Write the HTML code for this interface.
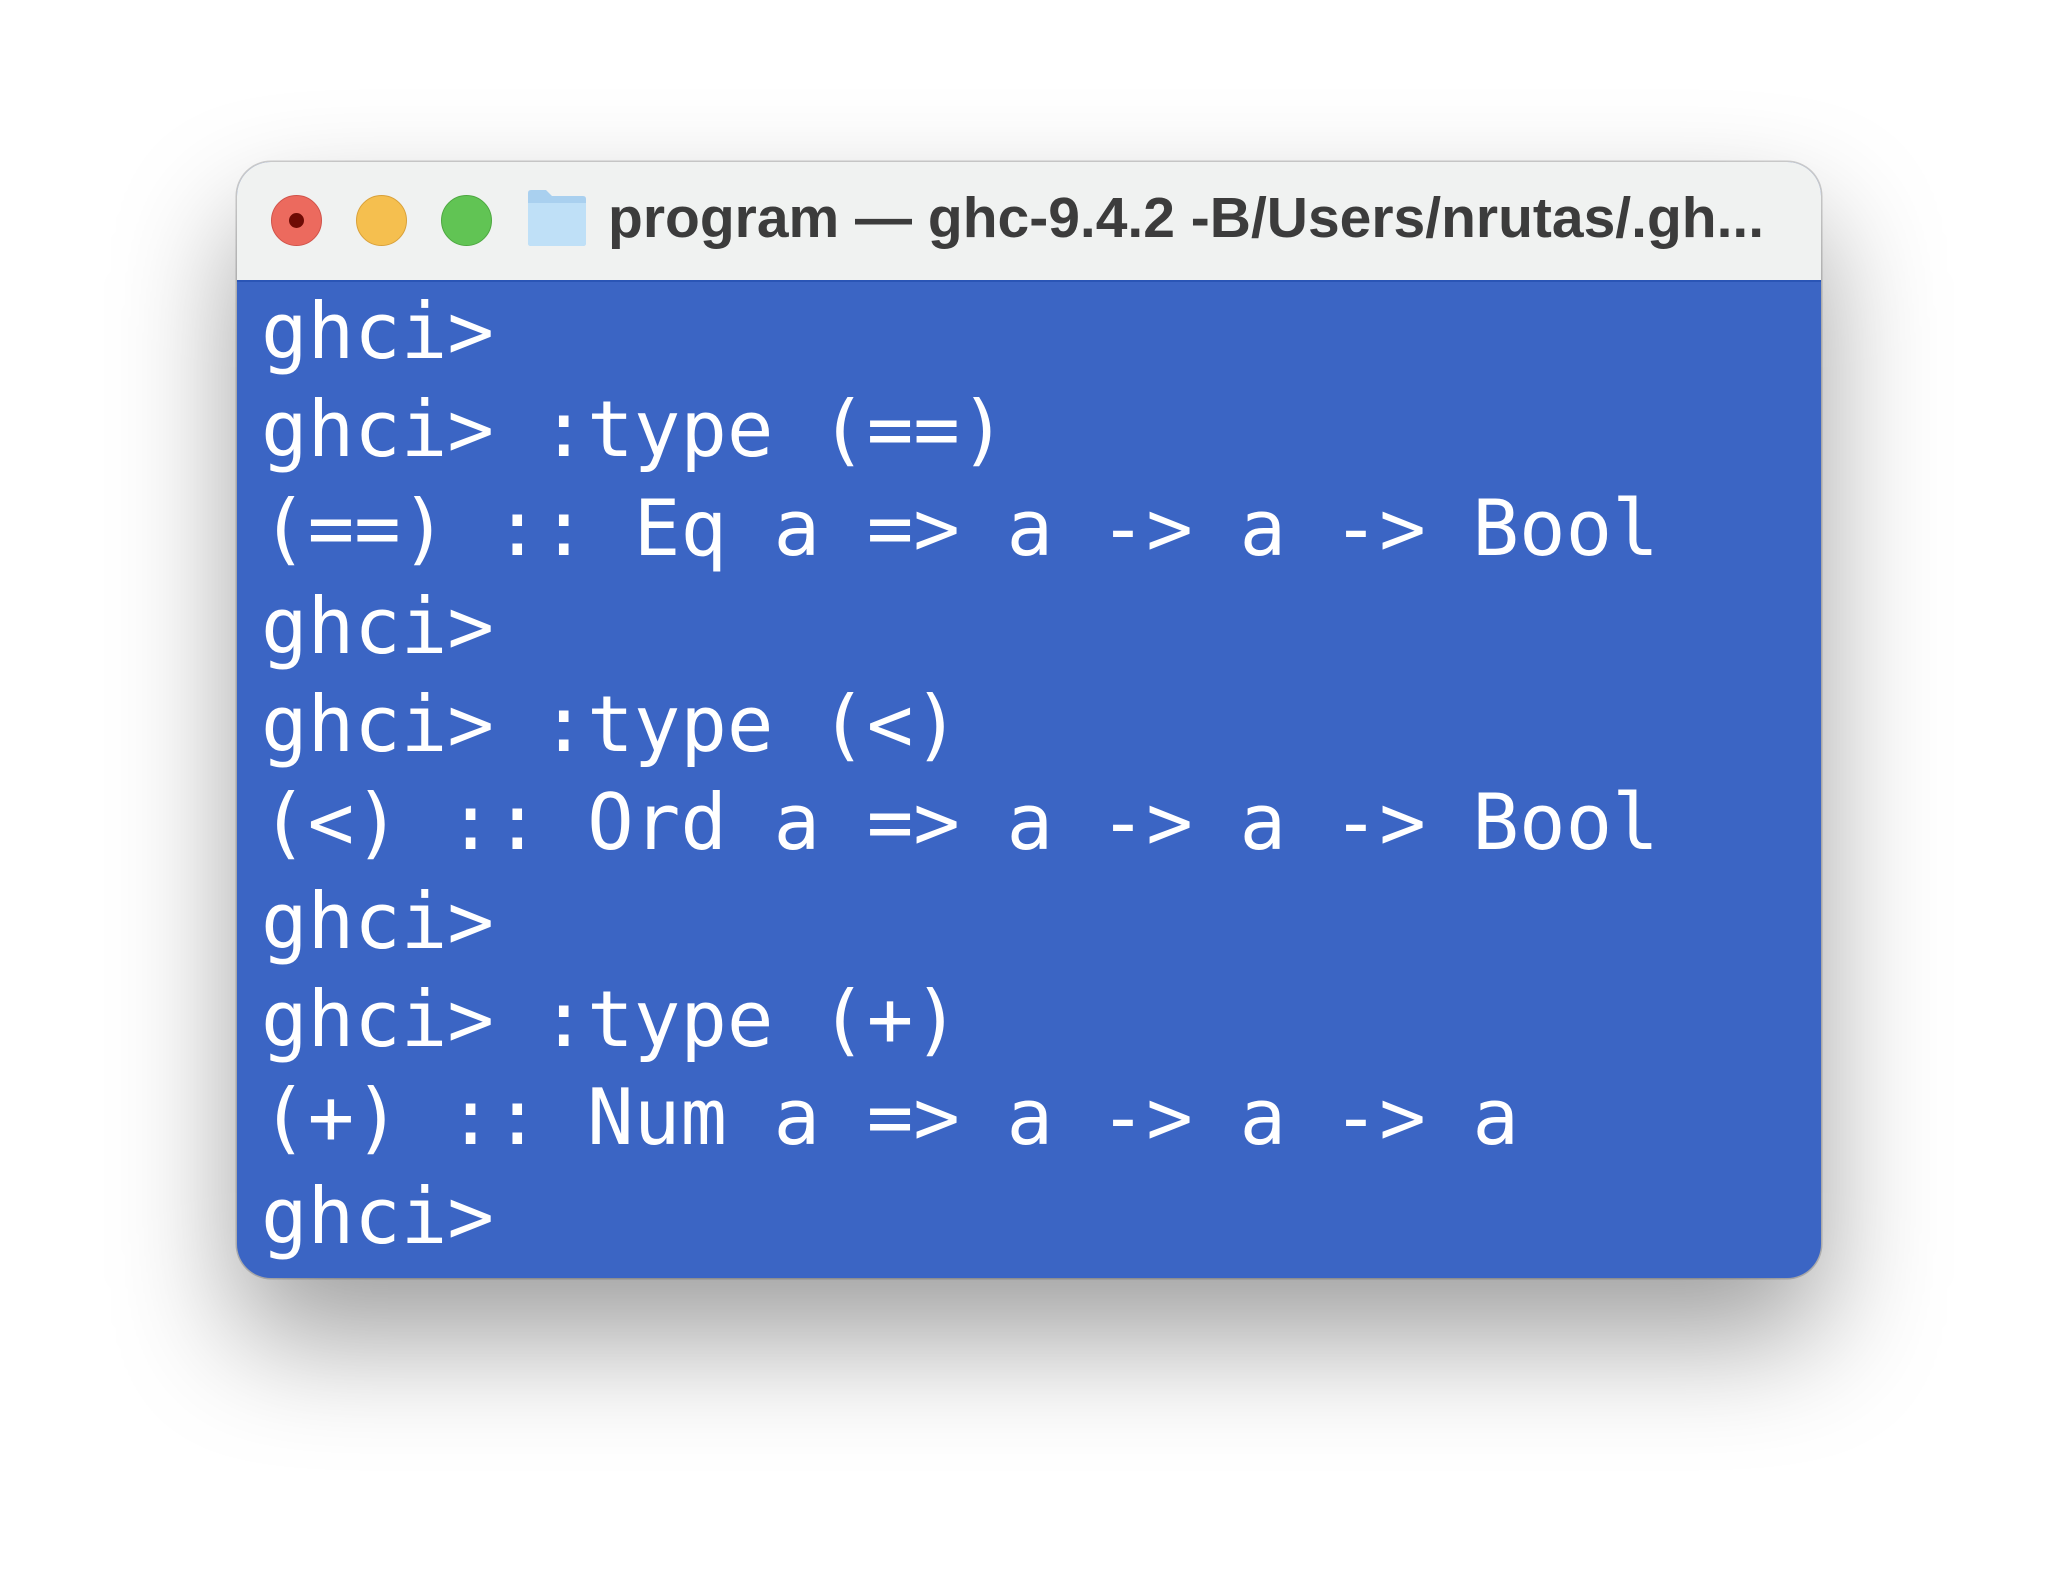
<!DOCTYPE html>
<html><head><meta charset="utf-8"><style>
html,body{margin:0;padding:0;width:2058px;height:1592px;background:#fff;overflow:hidden}
.win{position:absolute;left:237px;top:162px;width:1584px;height:1116px;border-radius:34px;overflow:hidden;background:#3b65c4;box-shadow:0 60px 120px rgba(0,0,0,0.38),0 0 0 1.5px rgba(0,0,0,0.18)}
.tb{position:absolute;left:0;top:0;width:100%;height:118px;background:#f0f2f1;border-bottom:2px solid #2a55b5}
.dot{position:absolute;top:33px;width:51px;height:51px;border-radius:50%}
.t{position:absolute;left:371px;top:23px;font:bold 57px "Liberation Sans",sans-serif;color:#3c3c3c;letter-spacing:0px;white-space:nowrap}
pre{position:absolute;left:24px;top:121px;margin:0;font:77.4px/98.3px "DejaVu Sans Mono","Liberation Mono",monospace;color:#fff}
</style></head><body>
<div class="win">
<div class="tb">
<div class="dot" style="left:34px;background:#ec6a5e;border:1px solid #d1534a;box-sizing:border-box"><div style="position:absolute;left:17px;top:17px;width:15px;height:15px;border-radius:50%;background:#6e0b05"></div></div>
<div class="dot" style="left:119px;background:#f5bf4f;border:1px solid #d9a13a;box-sizing:border-box"></div>
<div class="dot" style="left:204px;background:#61c454;border:1px solid #4ea841;box-sizing:border-box"></div>
<svg style="position:absolute;left:289px;top:27px" width="62" height="58" viewBox="0 0 62 58"><path d="M2 4 Q2 1 5 1 H20 L26 7 H57 Q60 7 60 10 V54 Q60 57 57 57 H5 Q2 57 2 54 Z" fill="#a9d0ef"/><path d="M2 14 H60 V54 Q60 57 57 57 H5 Q2 57 2 54 Z" fill="#bfe0f7"/></svg>
<div class="t">program — ghc-9.4.2 -B/Users/nrutas/.gh...</div>
</div>
<pre>ghci>
ghci> :type (==)
(==) :: Eq a => a -> a -> Bool
ghci>
ghci> :type (<)
(<) :: Ord a => a -> a -> Bool
ghci>
ghci> :type (+)
(+) :: Num a => a -> a -> a
ghci></pre>
</div>
</body></html>
